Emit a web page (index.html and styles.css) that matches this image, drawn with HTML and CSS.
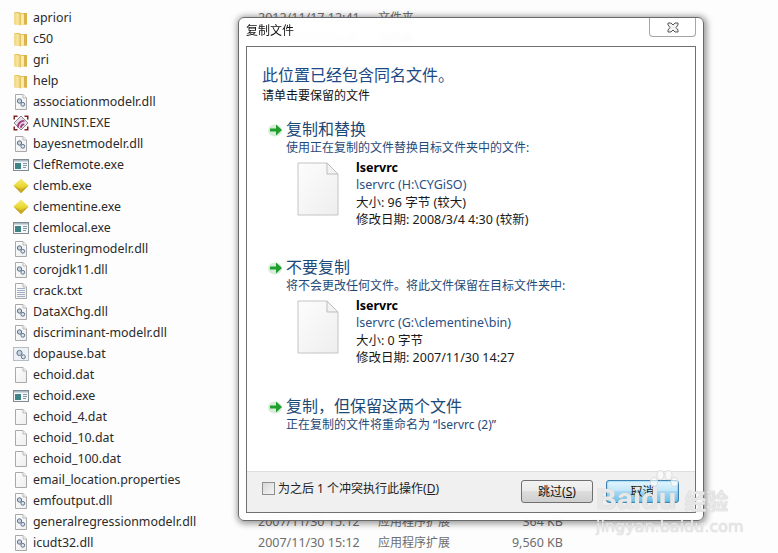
FILE: index.html
```html
<!DOCTYPE html>
<html lang="zh">
<head>
<meta charset="utf-8">
<title>复制文件</title>
<link rel="stylesheet" href="styles.css">
</head>
<body>
<svg class="defs" width="0" height="0">
  <defs>
    <linearGradient id="gf" x1="0" y1="0" x2="1" y2="0"><stop offset="0" stop-color="#f3d675"/><stop offset=".5" stop-color="#f7e6a4"/><stop offset="1" stop-color="#e2bd55"/></linearGradient>
    <linearGradient id="gd" x1="0" y1="0" x2="0" y2="1"><stop offset="0" stop-color="#f6ee80"/><stop offset=".55" stop-color="#e8d630"/><stop offset="1" stop-color="#b9a520"/></linearGradient>
    <linearGradient id="gp" x1="0" y1="0" x2="1" y2="1"><stop offset="0" stop-color="#fdfdfd"/><stop offset="1" stop-color="#eeeeee"/></linearGradient>
    <symbol id="i-folder" viewBox="0 0 16 16">
      <path d="M1.500 2h5l1 1h6.500v11.500h-12.500z" fill="#e6c25f"/>
      <path d="M1.500 2.500l6.500 1.500v11.500l-6.500-1.500z" fill="url(#gf)"/>
      <path d="M8 4h3v10.500h-3z" fill="#f8e9ae"/>
      <path d="M11 3h3v11.500h-3z" fill="#d9b34b"/>
    </symbol>
    <symbol id="i-page" viewBox="0 0 16 16">
      <path d="M2.500.500h7.500l3.500 3.500v11.500h-11z" fill="url(#gp)" stroke="#a9a9a9"/>
      <path d="M10 .500v3.500h3.500" fill="#f4f4f4" stroke="#b8b8b8"/>
    </symbol>
    <symbol id="i-dll" viewBox="0 0 16 16">
      <use href="#i-page"/>
      <circle cx="6.500" cy="7" r="2.200" fill="#c7d3e2" stroke="#5d7188"/>
      <circle cx="9.800" cy="10.300" r="1.900" fill="#dfe6ee" stroke="#5d7188"/>
    </symbol>
    <symbol id="i-txt" viewBox="0 0 16 16">
      <use href="#i-page"/>
      <path d="M4 5.500h8M4 7.500h8M4 9.500h8M4 11.500h8M4 13.500h8" stroke="#9fb0c2"/>
    </symbol>
    <symbol id="i-exe" viewBox="0 0 16 16">
      <rect x=".5" y="2.500" width="15" height="11" fill="#f4f6f8" stroke="#7f8c95"/>
      <path d="M1 3h14v1.500h-14z" fill="#a9bac6"/>
      <rect x="2" y="6" width="6" height="6" fill="#3f8484"/>
      <path d="M10 6.500h4M10 8.500h4M10 10.500h3" stroke="#8795a0"/>
    </symbol>
    <symbol id="i-diamond" viewBox="0 0 16 16">
      <path d="M8 .5l7.500 7-7.500 7.500-7.500-7.500z" fill="url(#gd)"/>
      <path d="M.5 7.500l7.500 4 7.500-4-7.500 7.500z" fill="#c9a724"/>
    </symbol>
    <symbol id="i-bat" viewBox="0 0 16 16">
      <rect x=".5" y="1.500" width="15" height="13" fill="#eef2f6" stroke="#75838f" stroke-dasharray="1 1"/>
      <circle cx="6.500" cy="7" r="2.600" fill="#c7d3e2" stroke="#5d7188"/>
      <circle cx="10.300" cy="10.800" r="2" fill="#dfe6ee" stroke="#5d7188"/>
    </symbol>
    <symbol id="i-aun" viewBox="0 0 16 16">
      <path d="M8 1l7 7-7 7-7-7z" fill="#e4dfe6" stroke="#8e8a90"/>
      <path d="M.5.500h4v1.500h-2.500v2.500h-1.500zM15.500.500h-4v1.500h2.500v2.500h1.500zM.5 15.500h4v-1.500h-2.500v-2.500h-1.500zM15.500 15.500h-4v-1.500h2.500v-2.500h1.500z" fill="#7c2222"/>
      <path d="M4 12c0-4 3-7 7-7l1 1.500c-3 0-6 2-6.500 6.500z" fill="#a0387e"/>
      <path d="M7 12.500c0-2 1.500-4 4-4l.5 1.500c-1.500 0-2.500 1-2.800 3z" fill="#a0387e"/>
    </symbol>
    <symbol id="i-big" viewBox="0 0 42 54">
      <path d="M1 1h29l11 11v41h-40z" fill="url(#gp)" stroke="#c4c4c4"/>
      <path d="M30 1v11h11z" fill="#f2f2f2" stroke="#bdbdbd"/>
    </symbol>
    <symbol id="i-arrow" viewBox="0 0 16 14">
      <ellipse cx="7" cy="7.500" rx="7" ry="6" fill="#cfe7cf" opacity=".8"/>
      <path d="M2 5.500h6v-4l6 5.500-6 5.500v-4h-6z" fill="#1f9f2e"/>
    </symbol>
  </defs>
</svg>

<main class="page">
  <section class="list">
    <div class="row"><svg class="ico"><use href="#i-folder"/></svg><span class="name">apriori</span><span class="date">2012/11/17 12:41</span><span class="type">文件夹</span></div>
    <div class="row"><svg class="ico"><use href="#i-folder"/></svg><span class="name">c50</span><span class="date">2012/11/17 12:41</span><span class="type">文件夹</span></div>
    <div class="row"><svg class="ico"><use href="#i-folder"/></svg><span class="name">gri</span></div>
    <div class="row"><svg class="ico"><use href="#i-folder"/></svg><span class="name">help</span></div>
    <div class="row"><svg class="ico"><use href="#i-dll"/></svg><span class="name">associationmodelr.dll</span></div>
    <div class="row"><svg class="ico"><use href="#i-aun"/></svg><span class="name">AUNINST.EXE</span></div>
    <div class="row"><svg class="ico"><use href="#i-dll"/></svg><span class="name">bayesnetmodelr.dll</span></div>
    <div class="row"><svg class="ico"><use href="#i-exe"/></svg><span class="name">ClefRemote.exe</span></div>
    <div class="row"><svg class="ico"><use href="#i-diamond"/></svg><span class="name">clemb.exe</span></div>
    <div class="row"><svg class="ico"><use href="#i-diamond"/></svg><span class="name">clementine.exe</span></div>
    <div class="row"><svg class="ico"><use href="#i-exe"/></svg><span class="name">clemlocal.exe</span></div>
    <div class="row"><svg class="ico"><use href="#i-dll"/></svg><span class="name">clusteringmodelr.dll</span></div>
    <div class="row"><svg class="ico"><use href="#i-dll"/></svg><span class="name">corojdk11.dll</span></div>
    <div class="row"><svg class="ico"><use href="#i-txt"/></svg><span class="name">crack.txt</span></div>
    <div class="row"><svg class="ico"><use href="#i-dll"/></svg><span class="name">DataXChg.dll</span></div>
    <div class="row"><svg class="ico"><use href="#i-dll"/></svg><span class="name">discriminant-modelr.dll</span></div>
    <div class="row"><svg class="ico"><use href="#i-bat"/></svg><span class="name">dopause.bat</span></div>
    <div class="row"><svg class="ico"><use href="#i-page"/></svg><span class="name">echoid.dat</span></div>
    <div class="row"><svg class="ico"><use href="#i-exe"/></svg><span class="name">echoid.exe</span></div>
    <div class="row"><svg class="ico"><use href="#i-page"/></svg><span class="name">echoid_4.dat</span></div>
    <div class="row"><svg class="ico"><use href="#i-page"/></svg><span class="name">echoid_10.dat</span></div>
    <div class="row"><svg class="ico"><use href="#i-page"/></svg><span class="name">echoid_100.dat</span></div>
    <div class="row"><svg class="ico"><use href="#i-page"/></svg><span class="name">email_location.properties</span></div>
    <div class="row"><svg class="ico"><use href="#i-dll"/></svg><span class="name">emfoutput.dll</span></div>
    <div class="row"><svg class="ico"><use href="#i-dll"/></svg><span class="name">generalregressionmodelr.dll</span><span class="date">2007/11/30 15:12</span><span class="type">应用程序扩展</span><span class="size">364 KB</span></div>
    <div class="row"><svg class="ico"><use href="#i-dll"/></svg><span class="name">icudt32.dll</span><span class="date">2007/11/30 15:12</span><span class="type">应用程序扩展</span><span class="size">9,560 KB</span></div>
  </section>

  <section class="dialog">
    <header class="titlebar">
      <h1 class="title">复制文件</h1>
      <div class="close"><svg class="close-x" viewBox="0 0 12 11"><path d="M1 1h3l2 2 2-2h3v2l-2 2.500 2 2.500v2h-3l-2-2-2 2h-3v-2l2-2.500-2-2.500z" fill="#f2f2f2" stroke="#555"/></svg></div>
    </header>
    <div class="panel">
      <div class="content">
        <h2 class="head">此位置已经包含同名文件。</h2>
        <p class="prompt">请单击要保留的文件</p>

        <div class="option opt-1">
          <div class="opt-title"><svg class="arrow"><use href="#i-arrow"/></svg>复制和替换</div>
          <p class="opt-desc">使用正在复制的文件替换目标文件夹中的文件:</p>
          <div class="file">
            <svg class="big"><use href="#i-big"/></svg>
            <div class="meta">
              <strong class="fname">lservrc</strong>
              <span class="path">lservrc (H:\CYGiSO)</span>
              <span>大小: 96 字节 (较大)</span>
              <span>修改日期: 2008/3/4 4:30 (较新)</span>
            </div>
          </div>
        </div>

        <div class="option opt-2">
          <div class="opt-title"><svg class="arrow"><use href="#i-arrow"/></svg>不要复制</div>
          <p class="opt-desc">将不会更改任何文件。将此文件保留在目标文件夹中:</p>
          <div class="file">
            <svg class="big"><use href="#i-big"/></svg>
            <div class="meta">
              <strong class="fname">lservrc</strong>
              <span class="path">lservrc (G:\clementine\bin)</span>
              <span>大小: 0 字节</span>
              <span>修改日期: 2007/11/30 14:27</span>
            </div>
          </div>
        </div>

        <div class="option opt-3">
          <div class="opt-title"><svg class="arrow"><use href="#i-arrow"/></svg>复制，但保留这两个文件</div>
          <p class="opt-desc">正在复制的文件将重命名为 “lservrc (2)”</p>
        </div>
      </div>
      <footer class="footer">
        <label class="check"><span class="box"></span>为之后 1 个冲突执行此操作(<u>D</u>)</label>
        <div class="buttons">
          <button class="btn">跳过(<u>S</u>)</button>
          <button class="btn btn-primary">取消</button>
        </div>
      </footer>
    </div>
  </section>

  <aside class="mark">
    <svg class="paw" viewBox="0 0 30 24"><g fill="#fff" fill-opacity=".6" stroke="#d6d6d6" stroke-width=".8"><ellipse cx="5" cy="12" rx="3.500" ry="4.500"/><ellipse cx="11.500" cy="5" rx="3.500" ry="4.800"/><ellipse cx="19.500" cy="5" rx="3.500" ry="4.800"/><ellipse cx="25.500" cy="12" rx="3.500" ry="4.500"/></g></svg>
    <div class="mark-top"><span class="mark-bai">Baidu</span><span class="mark-jy">经验</span></div>
    <div class="mark-url">jingyan.baidu.com</div>
  </aside>
</main>
</body>
</html>
```
FILE: styles.css
```css
* { box-sizing: border-box; }
html, body { margin: 0; padding: 0; }
body {
  background: #fdfdfd;
  font-family: "Noto Sans", "Noto Sans CJK SC", sans-serif;
  font-size: 12px;
  color: #222;
}
.defs { position: absolute; }
.page { position: relative; width: 778px; height: 553px; overflow: hidden; }

/* file list */
.list { padding-top: 7px; }
.row {
  display: grid;
  grid-template-columns: 33px 225px 120px 120px 65px;
  align-items: center;
  height: 21px;
  line-height: 21px;
  white-space: nowrap;
}
.ico { margin-left: 13px; width: 16px; height: 16px; }
.name { color: #2a2a2a; font-size: 12.400px; }
.date { grid-column: 3; color: #6d6d6d; font-size: 12.500px; }
.type { grid-column: 4; color: #6d6d6d; }
.size { grid-column: 5; color: #6d6d6d; text-align: right; font-size: 12.500px; }

/* dialog */
.dialog {
  position: absolute;
  left: 238px;
  top: 17px;
  width: 466px;
  height: 504px;
  padding: 0 7px 7px;
  display: flex;
  flex-direction: column;
  background: rgba(255, 255, 255, .94);
  -webkit-backdrop-filter: blur(3px);
  backdrop-filter: blur(3px);
  border: 1px solid #6a6a6a;
  border-radius: 6px;
  box-shadow: 1px 1px 6px 2px rgba(0, 0, 0, .38);
}
.titlebar { display: flex; justify-content: space-between; height: 28px; flex: none; }
.title { margin: 4px 0 0; font-size: 12px; font-weight: 400; line-height: 18px; color: #111; }
.close {
  width: 47px;
  height: 19px;
  display: flex;
  align-items: center;
  justify-content: center;
  background: rgba(255, 255, 255, .7);
  border: 1px solid #a6a6a6;
  border-top: 0;
  border-radius: 0 0 4px 4px;
}
.close-x { width: 12px; height: 11px; }
.panel {
  flex: 1;
  display: flex;
  flex-direction: column;
  background: #fff;
  border: 1px solid #707070;
}
.content { flex: 1; padding: 18px 15px 0; position: relative; }
.head { margin: 0; font-size: 16px; font-weight: 400; line-height: 21px; color: #1c4a86; }
.prompt { margin: 1px 0 0; line-height: 18px; color: #111; }
.option { padding-left: 24px; position: relative; color: #1f4a78; }
.opt-1 { margin-top: 13px; }
.opt-2 { margin-top: 28px; }
.opt-3 { margin-top: 29px; }
.opt-title { font-size: 16px; line-height: 22px; color: #1c4a78; }
.arrow { position: absolute; left: 6px; top: 5px; width: 16px; height: 14px; }
.opt-desc { margin: 0; line-height: 16px; }
.file { display: flex; margin-top: 3px; padding-left: 11px; }
.big { width: 42px; height: 54px; margin-top: 3px; flex: none; }
.meta { display: flex; flex-direction: column; margin-left: 17px; line-height: 17.300px; color: #1a1a1a; }
.meta span { display: block; font-size: 12.500px; }
.fname { color: #000; font-weight: 700; font-size: 12.500px; }
.meta .path { color: #2a4f85; }

.footer {
  height: 41px;
  flex: none;
  display: flex;
  align-items: flex-start;
  justify-content: space-between;
  padding: 8px 15px 0;
  background: #f0f0f0;
  border-top: 1px solid #dfdfdf;
}
.check { display: flex; align-items: center; height: 16px; color: #222; }
.box { width: 13px; height: 13px; margin-right: 3px; border: 1px solid #8e8f8f; background: linear-gradient(135deg, #d8d8d8, #f4f4f4); }
.buttons { display: flex; gap: 13px; margin-right: 1px; }
.btn {
  width: 72px;
  height: 23px;
  padding: 0;
  font: inherit;
  color: #111;
  line-height: 21px;
  border: 1px solid #707070;
  border-radius: 3px;
  background: linear-gradient(#f2f2f2 0, #ebebeb 48%, #dddddd 50%, #cfcfcf 100%);
}
.btn-primary {
  width: 73px;
  border-color: #3c7fb1;
  background: linear-gradient(#e5f6fd 0, #bfe6f8 48%, #a7d9f5 50%, #6dc0e8 100%);
  box-shadow: inset 0 0 2px #2fb2dc;
}

/* watermark */
.mark {
  position: absolute;
  left: 596px;
  top: 470px;
  width: 140px;
  height: 70px;
  color: rgba(255, 255, 255, .6);
  text-shadow: 0 0 1px #c4c4c4, 0 0 1px #cecece;
  pointer-events: none;
}
.paw { position: absolute; left: 53px; top: 0; width: 30px; height: 24px; }
.mark-top { display: flex; align-items: center; gap: 8px; margin-top: 16px; height: 26px; }
.mark-bai { font-family: "Liberation Sans", sans-serif; font-weight: 700; font-size: 29px; line-height: 26px; }
.mark-jy { font-family: "Noto Sans CJK SC", sans-serif; font-weight: 700; font-size: 22px; line-height: 26px; }
.mark-url { font-family: "DejaVu Sans", sans-serif; font-size: 16px; line-height: 20px; margin-top: 5px; white-space: nowrap; }
```
